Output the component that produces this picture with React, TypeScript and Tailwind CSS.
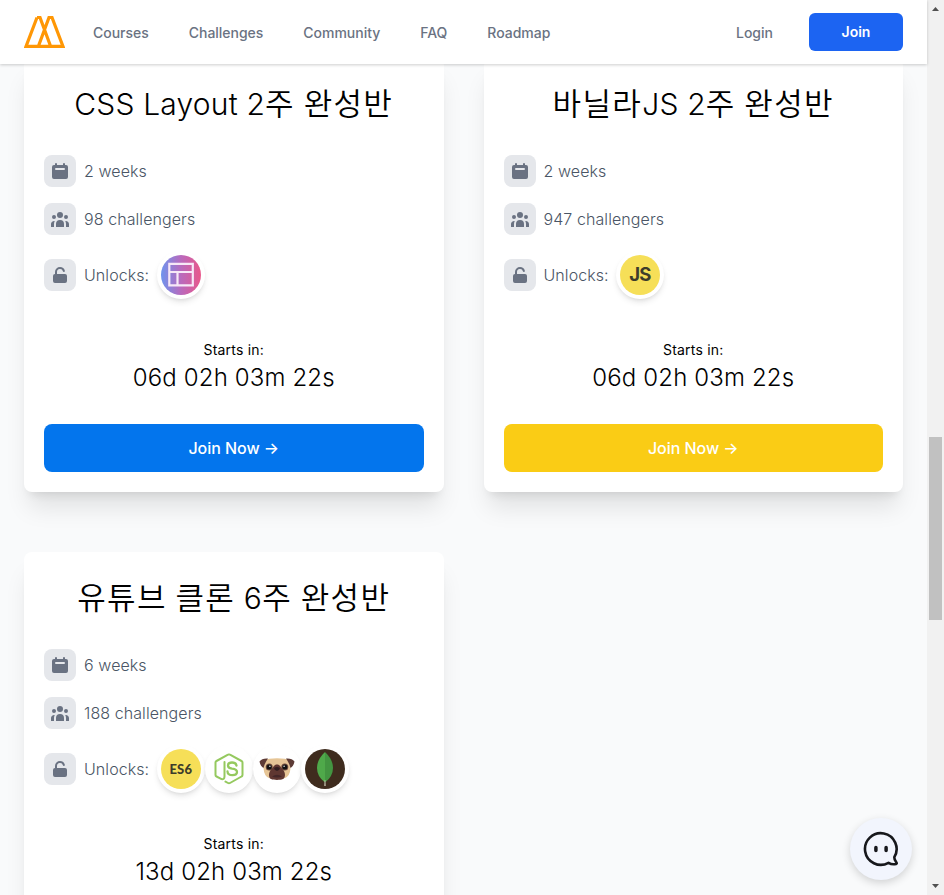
import React from "react";

const tile = "flex size-8 shrink-0 items-center justify-center rounded-lg bg-gray-200 text-gray-500";

function CalendarIcon() {
  return (
    <svg className="size-5" viewBox="0 0 20 20" fill="currentColor">
      <path fillRule="evenodd" clipRule="evenodd" d="M6 2a1 1 0 00-1 1v1H4a2 2 0 00-2 2v10a2 2 0 002 2h12a2 2 0 002-2V6a2 2 0 00-2-2h-1V3a1 1 0 10-2 0v1H7V3a1 1 0 00-1-1zm0 5a1 1 0 000 2h8a1 1 0 100-2H6z" />
    </svg>
  );
}

function PeopleIcon() {
  return (
    <svg className="size-5" viewBox="0 0 20 20" fill="currentColor">
      <path d="M13 6a3 3 0 11-6 0 3 3 0 016 0zM18 8a2 2 0 11-4 0 2 2 0 014 0zM14 15a4 4 0 00-8 0v3h8v-3zM6 8a2 2 0 11-4 0 2 2 0 014 0zM16 18v-3a5.972 5.972 0 00-.75-2.906A3.005 3.005 0 0119 15v3h-3zM4.750 12.094A5.973 5.973 0 004 15v3H1v-3a3 3 0 013.750-2.906z" />
    </svg>
  );
}

function UnlockIcon() {
  return (
    <svg className="size-5" viewBox="0 0 20 20" fill="currentColor">
      <path d="M10 2a5 5 0 00-5 5v2a2 2 0 00-2 2v5a2 2 0 002 2h10a2 2 0 002-2v-5a2 2 0 00-2-2H7V7a3 3 0 015.905-.75 1 1 0 001.937-.5A5.002 5.002 0 0010 2z" />
    </svg>
  );
}

type Badge = "css" | "js" | "es6" | "node" | "pug" | "mongo";

function BadgeArt({ kind }: { kind: Badge }) {
  switch (kind) {
    case "css":
      return (
        <svg className="size-10" viewBox="0 0 40 40" fill="none">
          <defs>
            <linearGradient id="layoutFill">
              <stop offset="0" stopColor="#6e94ee" />
              <stop offset=".5" stopColor="#b96abd" />
              <stop offset="1" stopColor="#e9578a" />
            </linearGradient>
          </defs>
          <circle cx="20" cy="20" r="20" fill="url(#layoutFill)" />
          <path d="M8.300 8.800h23.500v21.500H8.300zM8.300 17h23.500M16.500 17v13" stroke="#f7e8f7" strokeWidth="2.200" />
        </svg>
      );
    case "js":
      return (
        <div className="flex size-10 items-center justify-center rounded-full bg-[#f6df58] pr-px text-[18.5px] font-bold tracking-[-0.8px] text-[#3d3c2b]">
          JS
        </div>
      );
    case "es6":
      return (
        <div className="flex size-10 items-center justify-center rounded-full bg-[#f6df58] pt-px font-['Lato'] text-[13px] font-black tracking-[0.2px] text-[#3d3c2b]">
          ES6
        </div>
      );
    case "node":
      return (
        <svg className="size-10" viewBox="0 0 40 40" fill="none" stroke="#95c95f" strokeLinecap="round" strokeLinejoin="round">
          <path d="M15.500 13v14.500q0 3-3 2.600L7.500 27.500Q6.500 27 6.500 26V13.500q0-1 1-1.500L19 5.700q1-.6 2 0L32.500 12q1 .5 1 1.500V26q0 1-1 1.500L21 34q-1 .6-2 0l-2.500-1.400" strokeWidth="2" />
          <path d="M27.500 16.500q-.5-3-4.500-3t-4 3q0 2.700 4 3.200 5 .4 5 3.400t-4.500 3.100q-4.800 0-5-3.700" strokeWidth="2.300" />
        </svg>
      );
    case "pug":
      return (
        <svg className="size-10" viewBox="0 0 40 40">
          <path d="M8 11q3-1.700 12-1.700T32 11l1.500 8q-.5 8-5.500 10-8 2.500-16 0-5-2-5.500-10z" fill="#e6c596" />
          <path d="M11 9.500Q5 9 2.500 12.500q1 5 4 6.500 1-4.500 4.500-9.500zM29 9.500q6-.5 8.500 3-1 5-4 6.500-1-4.500-4.500-9.500z" fill="#5d3b36" />
          <circle cx="12.200" cy="18" r="3.500" fill="#6b4a3c" />
          <circle cx="27.800" cy="18" r="3.500" fill="#6b4a3c" />
          <path d="M20 15.500c-3 0-3.500 2.500-5.500 4.500-3.500 3.500-3 9-.5 10 3 1.200 9 1.200 12 0 2.500-1 3-6.500-.5-10-2-2-2.500-4.500-5.500-4.500z" fill="#5f3731" />
          <circle cx="12.200" cy="18" r="2.500" fill="#111" />
          <circle cx="27.800" cy="18" r="2.500" fill="#111" />
          <circle cx="12.900" cy="17.200" r=".7" fill="#fff" />
          <circle cx="27.100" cy="17.200" r=".7" fill="#fff" />
          <path d="M17 19q3-2 6 0-.5 2.800-3 3-2.500-.2-3-3z" fill="#321f20" />
          <path d="M15 27.500q5-3.500 10 0-5 2-10 0z" fill="#452728" />
        </svg>
      );
    case "mongo":
      return (
        <svg className="size-10" viewBox="0 0 40 40">
          <circle cx="20" cy="20" r="20" fill="#3f2c1e" />
          <path d="M20 3q-8 7.500-8 16 0 8.500 8 14.500z" fill="#4fa94a" />
          <path d="M20 3q8 7.500 8 16 0 8.500-8 14.500z" fill="#439541" />
          <path d="M19.600 31h.8l.3 6h-1.400z" fill="#c5c3af" />
        </svg>
      );
  }
}

interface Challenge {
  title: string;
  weeks: number;
  people: number;
  unlocks: Badge[];
  countdown: string;
  button?: string;
}

const challenges: Challenge[] = [
  { title: "CSS Layout 2주 완성반", weeks: 2, people: 98, unlocks: ["css"], countdown: "06d 02h 03m 22s", button: "bg-[#0375ed]" },
  { title: "바닐라JS 2주 완성반", weeks: 2, people: 947, unlocks: ["js"], countdown: "06d 02h 03m 22s", button: "bg-[#facc15]" },
  { title: "유튜브 클론 6주 완성반", weeks: 6, people: 188, unlocks: ["es6", "node", "pug", "mongo"], countdown: "13d 02h 03m 22s" },
];

// Hangul runs are set slightly larger and looser than the Latin letters beside them.
function Title({ text }: { text: string }) {
  return (
    <>
      {text.split(/([가-힣]+)/).map((part, i) =>
        i % 2 ? <span key={i} className="text-[31px] font-[350] tracking-[1.35px]">{part}</span> : part
      )}
    </>
  );
}

function Card({ c }: { c: Challenge }) {
  return (
    <article className="flex h-[434px] flex-col rounded-lg bg-white p-5 shadow-[0_20px_25px_-5px_rgba(0,0,0,0.1),0_8px_10px_-6px_rgba(0,0,0,0.1)]">
      <h2 className="mt-[7px] mb-[33px] h-[37px] text-center text-[30px] leading-[37px] font-light tracking-[0.2px] whitespace-nowrap text-black">
        <Title text={c.title} />
      </h2>
      <ul className="flex flex-col text-base font-light tracking-[0.08px] text-gray-600">
        <li className="flex items-center gap-2"><span className={tile}><CalendarIcon /></span>{c.weeks} weeks</li>
        <li className="mt-4 flex items-center gap-2"><span className={tile}><PeopleIcon /></span>{c.people} challengers</li>
        <li className="mt-4 flex items-center gap-2">
          <span className={tile}><UnlockIcon /></span><span className="w-[64.8px]">Unlocks:</span>
          <div className="flex">
            {c.unlocks.map((u) => (
              <span key={u} className="rounded-full border-4 border-white bg-white shadow-md"><BadgeArt kind={u} /></span>
            ))}
          </div>
        </li>
      </ul>
      <div className="mt-10 text-center text-black">
        <p className="text-sm leading-[22px] tracking-[0.2px]">Starts in:</p>
        <p className="text-2xl leading-[34px] font-light tracking-[0.14px]">{c.countdown}</p>
      </div>
      {c.button && (
        <button className={`mt-auto h-12 shrink-0 rounded-lg text-base font-medium tracking-[-0.05px] text-white ${c.button}`}>Join Now →</button>
      )}
    </article>
  );
}

export default function App() {
  return (
    <div className="relative flex h-[895px] w-[944px] overflow-hidden bg-[#f9fafb] font-['Inter','Noto_Sans_CJK_KR',sans-serif]">
      <div className="flex w-[927px] flex-col">
        <header className="relative z-10 flex h-16 shrink-0 items-center bg-white px-6 text-sm font-medium text-gray-500 shadow-[0_1px_3px_rgba(0,0,0,0.2)]">
          <svg className="mr-7 h-8 w-[41px]" viewBox="0 0 41 32" fill="none" stroke="#ff9705" strokeWidth="3.200">
            <path d="M13 1.500 2 30.400h37L28 1.500h-3L14.500 30M13 1.500h3L26.500 30" />
          </svg>
          <nav className="flex gap-10 pt-0.5 tracking-[-0.02px]">
            <a>Courses</a><a>Challenges</a><a>Community</a><a>FAQ</a><a>Roadmap</a>
          </nav>
          <a className="mr-9 ml-auto pt-0.5">Login</a>
          <button className="h-[38px] w-[94px] rounded-md bg-[#1c64f2] font-semibold text-white">Join</button>
        </header>
        <main className="-mt-1.5 grid grid-cols-2 gap-x-10 gap-y-[60px] px-6">
          {challenges.map((c) => <Card key={c.title} c={c} />)}
        </main>
      </div>
      <aside className="flex w-[17px] flex-col items-center bg-[#f1f1f1]">
        <svg className="h-[17px] w-[17px]" viewBox="0 0 17 17"><path d="m5 11 3.500-4 3.500 4z" fill="#505050" /></svg>
        <div className="mt-[420px] h-[183px] w-[13px] bg-[#c1c1c1]" />
        <svg className="mt-auto h-[17px] w-[17px]" viewBox="0 0 17 17"><path d="m5 6 3.500 4L12 6z" fill="#505050" /></svg>
      </aside>
      <button className="absolute top-[818px] left-[850px] flex size-[62px] items-center justify-center rounded-full bg-[#f2f5fd] shadow-[0_3px_8px_rgba(0,0,0,0.16)]">
        <svg className="size-9" viewBox="0 0 36 36" fill="none" stroke="#17181c" strokeWidth="2.600" strokeLinejoin="round">
          <path d="M31.300 26.200A15.800 15.800 0 1 0 25.500 31.800Q29 34 33 33 34.300 32.500 33.300 31.300 31.300 29 31.300 26.200z" />
          <path d="M12.900 16.500v3M23.100 16.500v3" strokeWidth="3.500" strokeLinecap="round" />
        </svg>
      </button>
    </div>
  );
}
